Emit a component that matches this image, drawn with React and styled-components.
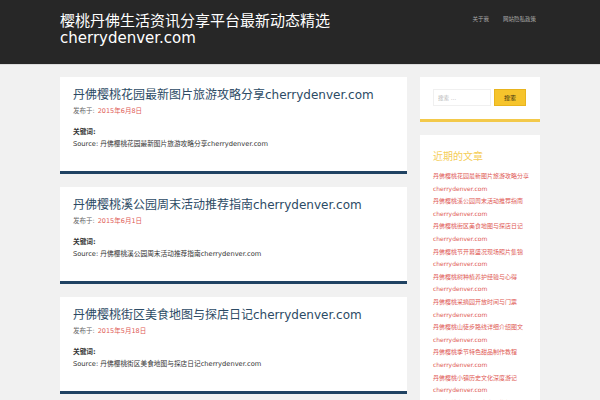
import styled, { createGlobalStyle } from "styled-components";

const GlobalStyle = createGlobalStyle`
  body {
    margin: 0;
    background: #f1f1f1;
    font-family: "DejaVu Sans", "Noto Sans CJK SC", sans-serif;
  }
`;

const Header = styled.header`
  background: #272727;
  height: 64px;
  border-bottom: 1px solid #dcdcdc;
`;

const HeaderInner = styled.div`
  width: 480px;
  margin: 0 auto;
  display: flex;
  justify-content: space-between;
  align-items: flex-start;
`;

const Brand = styled.div`
  padding-top: 13px;
  color: #ffffff;
  font-size: 15px;
  line-height: 17px;
`;

const BrandLine = styled.div`
  white-space: nowrap;
`;

const Nav = styled.nav`
  display: flex;
  gap: 14px;
  padding-top: 15px;
  padding-right: 4px;
`;

const NavItem = styled.a`
  color: #a9a9a9;
  font-size: 5.5px;
  line-height: 8px;
  text-decoration: none;
`;

const Page = styled.div`
  width: 480px;
  margin: 0 auto;
  padding-top: 12px;
  display: grid;
  grid-template-columns: 347px 120px;
  gap: 13px;
  align-items: start;
`;

const Main = styled.main`
  display: flex;
  flex-direction: column;
  gap: 13px;
`;

const Card = styled.article`
  background: #ffffff;
  border-bottom: 3px solid #1f4262;
  padding: 10px 13px 21px;
  height: 63px;
`;

const PostTitle = styled.a`
  display: block;
  color: #2c4a64;
  font-size: 12px;
  line-height: 16px;
  text-decoration: none;
  white-space: nowrap;
`;

const Meta = styled.div`
  margin-top: 3px;
  font-size: 6.5px;
  line-height: 10px;
  color: #666666;
`;

const DateLink = styled.span`
  color: #e05a55;
  margin-left: 3px;
`;

const Body = styled.div`
  margin-top: 10px;
  font-size: 6.7px;
  line-height: 12px;
  color: #333333;
`;

const Strong = styled.div`
  font-weight: bold;
`;

const Sidebar = styled.aside`
  display: flex;
  flex-direction: column;
  gap: 13px;
`;

const Widget = styled.section`
  background: #ffffff;
  padding: ${(p) => p.$pad};
  border-bottom: ${(p) => (p.$accent ? "3px solid #f3c94a" : "none")};
`;

const SearchForm = styled.form`
  display: flex;
  gap: 3px;
  margin: 0;
`;

const SearchInput = styled.input`
  width: 58px;
  height: 17px;
  box-sizing: border-box;
  border: 1px solid #f0f0f0;
  padding: 0 4px;
  font-family: inherit;
  font-size: 5.5px;
  outline: none;
  &::placeholder {
    color: #b5b5b5;
  }
`;

const SearchButton = styled.button`
  width: 32px;
  height: 17px;
  background: #f6c42c;
  border: 1px solid #e8b41e;
  color: #3b2f10;
  font-family: inherit;
  font-size: 6px;
  padding: 0;
`;

const WidgetTitle = styled.h3`
  margin: 0 0 6px;
  color: #f5cd58;
  font-size: 10px;
  line-height: 14px;
  font-weight: normal;
`;

const PostList = styled.ul`
  list-style: none;
  margin: 0;
  padding: 0;
  width: 100px;
`;

const PostItem = styled.li`
  font-size: 6px;
  line-height: 12.6px;
  color: #e05a55;
`;

const titles = [
  "丹佛樱桃花园最新图片旅游攻略分享",
  "丹佛樱桃溪公园周末活动推荐指南",
  "丹佛樱桃街区美食地图与探店日记",
];

const posts = [
  { title: titles[0], date: "2015年6月8日" },
  { title: titles[1], date: "2015年6月1日" },
  { title: titles[2], date: "2015年5月18日" },
];

const recent = [
  "丹佛樱桃花园最新图片旅游攻略分享",
  "丹佛樱桃溪公园周末活动推荐指南",
  "丹佛樱桃街区美食地图与探店日记",
  "丹佛樱桃节开幕盛况现场照片集锦",
  "丹佛樱桃树种植养护经验与心得",
  "丹佛樱桃采摘园开放时间与门票",
  "丹佛樱桃山徒步路线详细介绍图文",
  "丹佛樱桃季节特色甜品制作教程",
  "丹佛樱桃小镇历史文化深度游记",
  "丹佛樱桃主题摄影大赛获奖作品",
];

export default function App() {
  return (
    <>
      <GlobalStyle />
      <Header>
        <HeaderInner>
          <Brand>
            <BrandLine>樱桃丹佛生活资讯分享平台最新动态精选</BrandLine>
            <BrandLine>cherrydenver.com</BrandLine>
          </Brand>
          <Nav>
            <NavItem href="#">关于我</NavItem>
            <NavItem href="#">网站隐私政策</NavItem>
          </Nav>
        </HeaderInner>
      </Header>
      <Page>
        <Main>
          {posts.map((post) => (
            <Card key={post.date}>
              <PostTitle href="#">{post.title}cherrydenver.com</PostTitle>
              <Meta>
                发布于:<DateLink>{post.date}</DateLink>
              </Meta>
              <Body>
                <Strong>关键词:</Strong>
                <div>Source: {post.title}cherrydenver.com</div>
              </Body>
            </Card>
          ))}
        </Main>
        <Sidebar>
          <Widget $pad="12px 13px 13px" $accent>
            <SearchForm onSubmit={(e) => e.preventDefault()}>
              <SearchInput placeholder="搜索 …" />
              <SearchButton type="submit">搜索</SearchButton>
            </SearchForm>
          </Widget>
          <Widget $pad="15px 7px 10px 13px">
            <WidgetTitle>近期的文章</WidgetTitle>
            <PostList>
              {recent.map((t) => (
                <PostItem key={t}>
                  {t}
                  <br />
                  cherrydenver.com
                </PostItem>
              ))}
            </PostList>
          </Widget>
        </Sidebar>
      </Page>
    </>
  );
}
